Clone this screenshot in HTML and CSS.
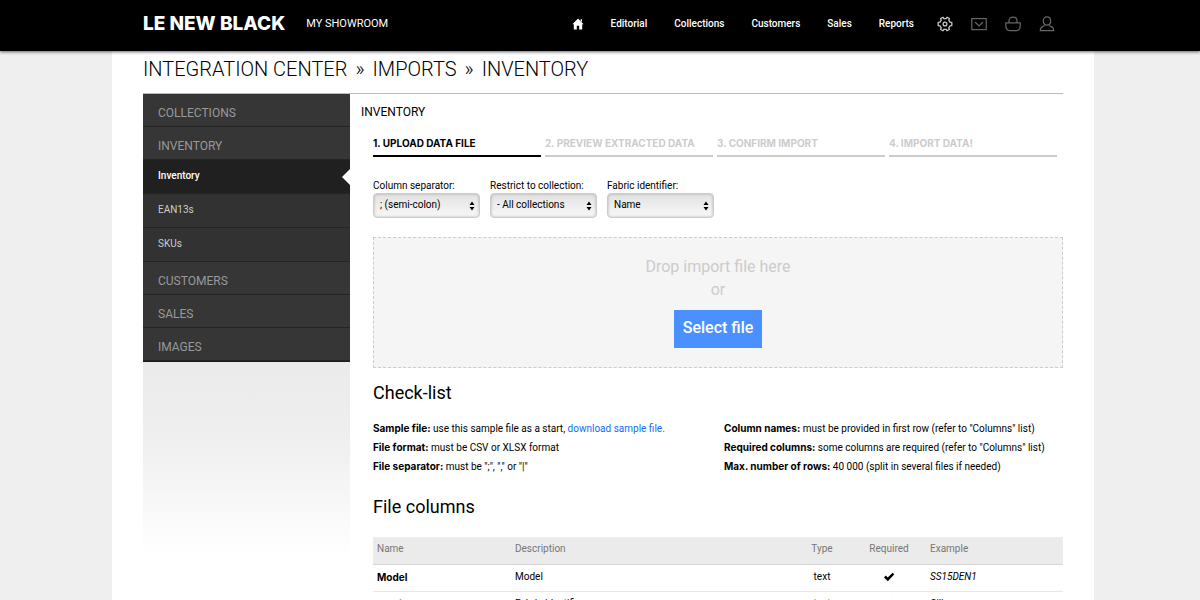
FILE: index.html
```html
<!DOCTYPE html>
<html lang="en">
<head>
    <meta charset="UTF-8">
    <meta name="viewport" content="width=device-width, initial-scale=1.0">
    <title>Integration Center - Inventory</title>
    <link rel="stylesheet" href="styles.css">
</head>
<body>

    <header class="topbar">
        <div class="topbar-inner">
            <a class="logo" href="#">LE NEW BLACK</a>
            <a class="showroom" href="#">MY SHOWROOM</a>
            <nav class="main-nav">
                <a href="#" aria-label="Home">
                    <svg width="12" height="12" viewBox="0 0 12 12"><path fill="#fff" d="M6 0.6 L11.6 6.2 H10.2 V11.4 H7.2 V7.8 H4.8 V11.4 H1.8 V6.2 H0.4 Z M8.6 1.2 H10 V4 L8.6 2.8 Z"/></svg>
                </a>
                <a href="#">Editorial</a>
                <a href="#">Collections</a>
                <a href="#">Customers</a>
                <a href="#">Sales</a>
                <a href="#">Reports</a>
            </nav>
            <nav class="icon-nav">
                <a href="#" aria-label="Settings">
                    <svg width="16" height="16" viewBox="0 0 16 16" fill="none" stroke="#c8c8c8" stroke-width="1.3" stroke-linejoin="round"><path d="M6 1.2 L6.8 2.6 H9.2 L10 1.2 L12.4 2.5 L11.8 4.1 L13 6.1 L14.8 6.4 V9.6 L13 9.9 L11.8 11.9 L12.4 13.5 L10 14.8 L9.2 13.4 H6.8 L6 14.8 L3.6 13.5 L4.2 11.9 L3 9.9 L1.2 9.6 V6.4 L3 6.1 L4.2 4.1 L3.6 2.5 Z"/><circle cx="8" cy="8" r="1.9"/></svg>
                </a>
                <a href="#" aria-label="Messages">
                    <svg width="16" height="16" viewBox="0 0 16 16" fill="none" stroke="#666" stroke-width="1.2"><rect x="0.8" y="2.6" width="14.4" height="11"/><path d="M4 6 L8 10 L12 6"/></svg>
                </a>
                <a href="#" aria-label="Basket">
                    <svg width="16" height="16" viewBox="0 0 16 16" fill="none" stroke="#666" stroke-width="1.2"><path d="M0.8 6.8 H15.2 V9.5 C15.2 12.5 13.6 14.6 11.4 14.6 H4.6 C2.4 14.6 0.8 12.5 0.8 9.5 Z M4 6.8 V4.8 C4 2.6 5.6 1.2 8 1.2 C10.4 1.2 12 2.6 12 4.8 V6.8"/></svg>
                </a>
                <a href="#" aria-label="Account">
                    <svg width="16" height="16" viewBox="0 0 16 16" fill="none" stroke="#666" stroke-width="1.2"><path d="M8 0.8 C10.3 0.8 11.7 2.4 11.7 4.8 C11.7 7.2 10.3 9.2 8 9.2 C5.7 9.2 4.3 7.2 4.3 4.8 C4.3 2.4 5.7 0.8 8 0.8 Z M5.6 9.6 C3 10.4 1.3 11.4 1.3 14.6 H14.7 C14.7 11.4 13 10.4 10.4 9.6"/></svg>
                </a>
            </nav>
        </div>
    </header>

    <div class="page">
        <h1>INTEGRATION CENTER<span class="sep">»</span>IMPORTS<span class="sep">»</span>INVENTORY</h1>

        <div class="columns">
            <aside class="sidebar">
                <nav class="side-menu">
                    <a class="group" href="#">COLLECTIONS</a>
                    <a class="group" href="#">INVENTORY</a>
                    <a class="sub active" href="#">Inventory</a>
                    <a class="sub" href="#">EAN13s</a>
                    <a class="sub" href="#">SKUs</a>
                    <a class="group" href="#">CUSTOMERS</a>
                    <a class="group" href="#">SALES</a>
                    <a class="group" href="#">IMAGES</a>
                </nav>
                <div class="side-fade"></div>
            </aside>

            <main class="content">
                <h2>INVENTORY</h2>

                <ol class="steps">
                    <li class="current">1. UPLOAD DATA FILE</li>
                    <li>2. PREVIEW EXTRACTED DATA</li>
                    <li>3. CONFIRM IMPORT</li>
                    <li>4. IMPORT DATA!</li>
                </ol>

                <form class="options">
                    <div class="field">
                        <label for="separator">Column separator:</label>
                        <select id="separator">
                            <option>; (semi-colon)</option>
                        </select>
                    </div>
                    <div class="field">
                        <label for="collection">Restrict to collection:</label>
                        <select id="collection">
                            <option>- All collections</option>
                        </select>
                    </div>
                    <div class="field">
                        <label for="fabric">Fabric identifier:</label>
                        <select id="fabric">
                            <option>Name</option>
                        </select>
                    </div>
                </form>

                <div class="dropzone">
                    <p>Drop import file here</p>
                    <p>or</p>
                    <button type="button">Select file</button>
                </div>

                <h3>Check-list</h3>
                <div class="checklist">
                    <ul>
                        <li><b>Sample file:</b> use this sample file as a start, <a href="#">download sample file.</a></li>
                        <li><b>File format:</b> must be CSV or XLSX format</li>
                        <li><b>File separator:</b> must be ";", "," or "|"</li>
                    </ul>
                    <ul>
                        <li><b>Column names:</b> must be provided in first row (refer to "Columns" list)</li>
                        <li><b>Required columns:</b> some columns are required (refer to "Columns" list)</li>
                        <li><b>Max. number of rows:</b> 40 000 (split in several files if needed)</li>
                    </ul>
                </div>

                <h3>File columns</h3>
                <table>
                    <thead>
                        <tr>
                            <th class="col-name">Name</th>
                            <th class="col-desc">Description</th>
                            <th class="col-type">Type</th>
                            <th class="col-req">Required</th>
                            <th>Example</th>
                        </tr>
                    </thead>
                    <tbody>
                        <tr>
                            <td class="col-name">Model</td>
                            <td>Model</td>
                            <td class="col-type">text</td>
                            <td class="col-req"><svg width="12" height="10" viewBox="0 0 12 10" role="img" aria-label="Yes"><path d="M1 5.4 L2.8 3.6 L4.7 5.5 L9.6 0.8 L11.2 2.4 L4.8 9.2 Z"/></svg></td>
                            <td class="example">SS15DEN1</td>
                        </tr>
                        <tr>
                            <td class="col-name">Fabric</td>
                            <td>Fabric identifier</td>
                            <td class="col-type">text</td>
                            <td class="col-req"><svg width="12" height="10" viewBox="0 0 12 10" role="img" aria-label="Yes"><path d="M1 5.4 L2.8 3.6 L4.7 5.5 L9.6 0.8 L11.2 2.4 L4.8 9.2 Z"/></svg></td>
                            <td class="example">Silk</td>
                        </tr>
                    </tbody>
                </table>
            </main>
        </div>
    </div>

</body>
</html>
```

FILE: styles.css
```css
/* General Styles */
* {
    box-sizing: border-box;
}
body {
    margin: 0;
    padding-left: 6px;
    min-height: 100vh;
    display: flex;
    flex-direction: column;
    background-color: #efefef;
    color: #000;
    font-family: Roboto, Arial, sans-serif;
    font-size: 10px;
    line-height: 14px;
}
a {
    color: inherit;
    text-decoration: none;
}
ul, ol {
    list-style: none;
    margin: 0;
    padding: 0;
}
/* Bold text is set in a wider face */
b, .logo, .steps, td.col-name {
    font-family: Inter, Arial, sans-serif;
    font-weight: 700;
}

/* Top bar */
.topbar {
    margin-left: -6px;
    padding-left: 6px;
    background-color: #000;
    color: #fff;
    box-shadow: 0 1px 3px rgba(0, 0, 0, 0.6);
    z-index: 1;
}
.topbar-inner {
    display: flex;
    align-items: center;
    max-width: 982px;
    height: 51px;
    margin: 0 auto;
    padding: 0 39px 4px 31px;
    font-weight: 500;
}
.logo {
    margin-right: 21px;
    font-size: 19px;
    line-height: 24px;
    font-weight: 800;
}
.showroom {
    font-size: 11px;
    font-weight: 400;
}
.main-nav {
    display: flex;
    align-items: center;
    gap: 27px;
    margin-left: auto;
}
.icon-nav {
    display: flex;
    gap: 18px;
    margin-left: 23px;
}
svg {
    display: block;
}

/* Page */
.page {
    width: 100%;
    max-width: 982px;
    flex: 1;
    margin: 0 auto;
    padding: 0 31px;
    background-color: #fff;
}
h1 {
    margin: 0;
    padding: 6px 0 12px;
    font-size: 20px;
    line-height: 24px;
    font-weight: 300;
}
.sep {
    margin: 0 8px;
}
.columns {
    display: flex;
    border-top: 1px solid #bbb;
}

/* Side menu */
.sidebar {
    flex: 0 0 207px;
}
.side-menu {
    background-color: #363636;
    border-bottom: 1px solid #1c1c1c;
}
.side-menu a {
    display: block;
    padding-left: 15px;
    border-bottom: 1px solid #242424;
}
.group {
    height: 33px;
    color: #999;
    font-size: 12px;
    line-height: 38px;
}
.sub {
    height: 34px;
    background-color: #323232;
    color: #ccc;
    line-height: 32px;
}
.side-menu .active {
    display: flex;
    justify-content: space-between;
    background-color: #202020;
    color: #fff;
    font-weight: 500;
}
/* Arrow pointing at the open section */
.active::after {
    content: "";
    align-self: center;
    border: 8px solid transparent;
    border-left: 0;
    border-right-color: #fff;
}
.side-fade {
    height: 195px;
    background: linear-gradient(#ebebeb, #eee 35%, #fff);
}

/* Content */
.content {
    flex: 1;
    padding-left: 23px;
}
h2 {
    margin: 10px 0 15px -12px;
    font-size: 12px;
    line-height: 16px;
    font-weight: 400;
}
.steps {
    display: grid;
    grid-template-columns: repeat(4, 1fr);
    gap: 4px;
    margin-right: 6px;
    color: #ccc;
}
.steps li {
    padding-bottom: 4px;
    line-height: 16px;
    border-bottom: 2px solid #ccc;
}
.steps .current {
    color: #000;
    border-color: #000;
}
.options {
    display: flex;
    gap: 10px;
    margin-top: 22px;
}
.field {
    width: 107px;
}
.field label {
    display: block;
    white-space: nowrap;
}
select {
    display: block;
    width: 100%;
    height: 25px;
    padding: 0 6px 2px;
    appearance: none;
    border: 1px solid #ccc;
    border-radius: 4px;
    box-shadow: inset 0 0 3px rgba(0, 0, 0, 0.25);
    background:
        url("data:image/svg+xml,%3Csvg xmlns='http://www.w3.org/2000/svg' width='6' height='10'%3E%3Cpath d='M3 0.5L5.5 4H0.5zM3 9.5L0.5 6H5.5z'/%3E%3C/svg%3E") no-repeat right 4px center,
        linear-gradient(#e2e2e2, #f8f8f8);
    color: #000;
    font: inherit;
}

/* Upload area */
.dropzone {
    margin-top: 19px;
    padding: 17px 0 19px;
    border: 1px dashed #ccc;
    background-color: #f5f5f5;
    color: #ccc;
    font-size: 16px;
    line-height: 23px;
    text-align: center;
}
.dropzone p {
    margin: 0;
}
.dropzone button {
    margin-top: 9px;
    padding: 6px 9px 9px;
    border: none;
    background-color: #4a90ff;
    color: #fff;
    font: inherit;
    font-weight: 500;
    cursor: pointer;
}

/* Check-list */
h3 {
    margin: 13px 0 14px;
    font-size: 18px;
    line-height: 24px;
    font-weight: 400;
}
.checklist {
    display: grid;
    grid-template-columns: 351px 1fr;
    margin-bottom: 19px;
    line-height: 19px;
}
.checklist a {
    color: #0d6efd;
}

/* Columns table */
table {
    width: 100%;
    margin-top: 18px;
    border-collapse: collapse;
}
th, td {
    height: 27px;
    padding: 0 4px 2px;
    text-align: left;
}
th {
    border-bottom: 1px solid #d4d4d4;
    background-color: #ebebeb;
    color: #777;
    font-weight: 400;
}
td {
    border-bottom: 1px solid #e8e8e8;
}
.col-name {
    width: 138px;
}
.col-desc {
    width: 281px;
}
.col-type {
    width: 60px;
    text-align: center;
}
.col-req {
    width: 74px;
    text-align: center;
}
.col-req svg {
    margin: 0 auto;
}
.example {
    font-style: italic;
}
```
